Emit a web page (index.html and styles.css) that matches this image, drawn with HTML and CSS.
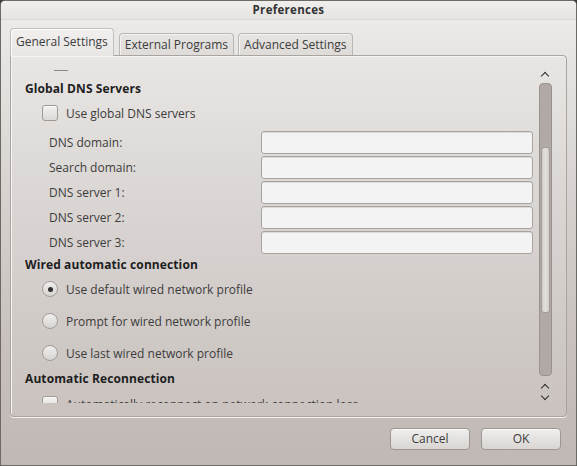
FILE: index.html
```html
<!DOCTYPE html>
<html>
<head>
<meta charset="utf-8">
<title>Preferences</title>
<link rel="stylesheet" href="styles.css">
</head>
<body>
<div class="window">
  <div class="titlebar">Preferences</div>
  <div class="client">
    <div class="notebook">
      <div class="tabs">
        <div class="tab active">General Settings</div>
        <div class="tab">External Programs</div>
        <div class="tab">Advanced Settings</div>
      </div>
      <div class="frame">
        <div class="viewport">
          <div class="content">
            <div class="dash"></div>
            <div class="section">Global DNS Servers</div>
            <div class="option check-row"><span class="checkbox"></span><span>Use global DNS servers</span></div>
            <div class="field"><span class="flabel">DNS domain:</span><span class="entry"></span></div>
            <div class="field"><span class="flabel">Search domain:</span><span class="entry"></span></div>
            <div class="field"><span class="flabel">DNS server 1:</span><span class="entry"></span></div>
            <div class="field"><span class="flabel">DNS server 2:</span><span class="entry"></span></div>
            <div class="field"><span class="flabel">DNS server 3:</span><span class="entry"></span></div>
            <div class="section s2">Wired automatic connection</div>
            <div class="option radio-row"><span class="radio on"></span><span>Use default wired network profile</span></div>
            <div class="option radio-row"><span class="radio"></span><span>Prompt for wired network profile</span></div>
            <div class="option radio-row"><span class="radio"></span><span>Use last wired network profile</span></div>
            <div class="section s3">Automatic Reconnection</div>
            <div class="option check-row last"><span class="checkbox"></span><span>Automatically reconnect on network connection loss</span></div>
          </div>
        </div>
        <div class="scrollbar">
          <div class="arrow up"></div>
          <div class="trough"><div class="slider"></div></div>
          <div class="arrow up small"></div>
          <div class="arrow down"></div>
        </div>
      </div>
    </div>
    <div class="buttons">
      <div class="button">Cancel</div>
      <div class="button">OK</div>
    </div>
  </div>
</div>
</body>
</html>
```

FILE: styles.css
```css
* { box-sizing: border-box; }
html, body { margin: 0; padding: 0; }
body {
  width: 577px;
  height: 466px;
  overflow: hidden;
  font-family: "Open Sans", "DejaVu Sans", sans-serif;
  font-size: 12px;
  color: #3c3c3c;
  background: #3c3b37;
}
.window {
  width: 577px;
  height: 466px;
  border: 1px solid #6d6a66;
  border-radius: 5px 5px 0 0;
  background: linear-gradient(#eeedeb 0px, #e6e4e2 60px, #d6d1ce 200px, #c7c0bd 350px, #bfb8b5 466px);
  display: flex;
  flex-direction: column;
  overflow: hidden;
}
.titlebar {
  height: 19px;
  flex: none;
  text-align: center;
  font-weight: bold;
  font-size: 11.5px;
  line-height: 18px;
  color: #333333;
  letter-spacing: 0.3px;
  background: linear-gradient(#efeeec, #e6e4e1);
  border-bottom: 1px solid #dad7d4;
}
.client {
  flex: 1;
  display: flex;
  flex-direction: column;
  padding: 8px 9px 0 9px;
}
.notebook { display: flex; flex-direction: column; }
.tabs {
  display: flex;
  align-items: flex-end;
  height: 27px;
  gap: 4px;
  position: relative;
  z-index: 2;
}
.tab {
  height: 22px;
  padding: 0 5px;
  line-height: 21px;
  border: 1px solid #bcb6b2;
  border-bottom: none;
  border-radius: 4px 4px 0 0;
  background: linear-gradient(#e6e4e1, #dedbd8);
  box-shadow: inset 1px 1px 0 #f4f3f2;
  color: #3c3c3c;
  white-space: nowrap;
}
.tab.active {
  height: 28px;
  line-height: 26px;
  padding: 0 5px;
  margin-right: 1px;
  background: linear-gradient(#f1f0ef, #e8e6e4);
  border-color: #c4bfbb;
  margin-bottom: -1px;
  box-shadow: inset 1px 1px 0 #fbfbfa;
}
.frame {
  height: 362px;
  border: 1px solid #aaa4a0;
  border-radius: 0 4px 4px 4px;
  box-shadow: inset 1px 1px 0 #f6f5f4, 0 1px 0 #f4f2f1;
  background: linear-gradient(#e8e6e4 0px, #dcd8d5 120px, #c9c2bf 361px);
  display: flex;
  padding: 12px 14px 12px 1px;
}
.viewport {
  flex: 1;
  overflow: hidden;
  height: 335px;
}
.content {
  padding-left: 13px;
  padding-top: 2px;
}
.dash {
  width: 14px;
  height: 1px;
  background: #8d8884;
  margin: 0 0 9px 29px;
}
.section {
  font-weight: bold;
  color: #1e1e1e;
  height: 17px;
  line-height: 17px;
  letter-spacing: 0.1px;
}
.option {
  display: flex;
  align-items: center;
  white-space: nowrap;
  color: #3c3c3c;
}
.check-row {
  height: 16px;
  padding-left: 17px;
  margin-top: 8px;
  margin-bottom: 9px;
  gap: 8px;
}
.checkbox {
  width: 16px;
  height: 16px;
  flex: none;
  border: 1px solid #9f9995;
  border-radius: 3px;
  background: linear-gradient(#f3f2f1, #dbd8d5);
  box-shadow: inset 0 1px 0 #fcfcfc;
}
.field {
  display: flex;
  align-items: center;
  height: 25px;
  padding-left: 24px;
}
.flabel { flex: 1; }
.entry {
  width: 272px;
  height: 23px;
  flex: none;
  border: 1px solid #a8a39f;
  border-radius: 3px;
  background: #f3f3f3;
  box-shadow: inset 0 1px 0 #dcdad8;
}
.s2 { margin-top: 1px; }
.radio-row {
  height: 32px;
  padding-left: 17px;
  gap: 8px;
}
.radio {
  width: 16px;
  height: 16px;
  flex: none;
  border: 1px solid #a29c98;
  border-radius: 50%;
  background: linear-gradient(#f0efee, #d6d3d0);
  display: flex;
  align-items: center;
  justify-content: center;
}
.radio.on::after {
  content: "";
  width: 5px;
  height: 5px;
  border-radius: 50%;
  background: #2f2f2f;
}
.s3 { margin-top: 1px; }
.last { margin-top: 9px; }
.scrollbar {
  width: 14px;
  flex: none;
  display: flex;
  flex-direction: column;
  align-items: center;
  margin-left: 5px;
}
.arrow {
  width: 14px;
  height: 12px;
  flex: none;
  position: relative;
}
.arrow::before {
  content: "";
  position: absolute;
  left: 4px;
  width: 5px;
  height: 5px;
  border-left: 1.5px solid #2c2c2c;
  border-top: 1.5px solid #2c2c2c;
}
.arrow.up::before { top: 5px; transform: rotate(45deg); }
.arrow.down::before { top: 1px; transform: rotate(225deg); }
.arrow.small { margin-top: 4px; }
.trough {
  width: 13px;
  height: 294px;
  margin-top: 3px;
  border: 1px solid #9a928f;
  border-radius: 4px;
  background: #b1a9a6;
  padding: 63px 1px 0 1px;
}
.slider {
  width: 9px;
  height: 166px;
  border: 1px solid #a29b97;
  border-radius: 3px;
  background: linear-gradient(90deg, #d2cecb, #e2dfdc, #d2cecb);
  margin: 0 auto;
}
.buttons {
  display: flex;
  justify-content: flex-end;
  gap: 11px;
  padding: 11px 6px 0 0;
}
.button {
  width: 80px;
  height: 22px;
  border: 1px solid #9d9794;
  border-radius: 4px;
  background: linear-gradient(#f0efee, #d8d5d2);
  box-shadow: inset 0 1px 0 #fbfbfa;
  text-align: center;
  line-height: 20px;
  color: #3c3c3c;
}
```
